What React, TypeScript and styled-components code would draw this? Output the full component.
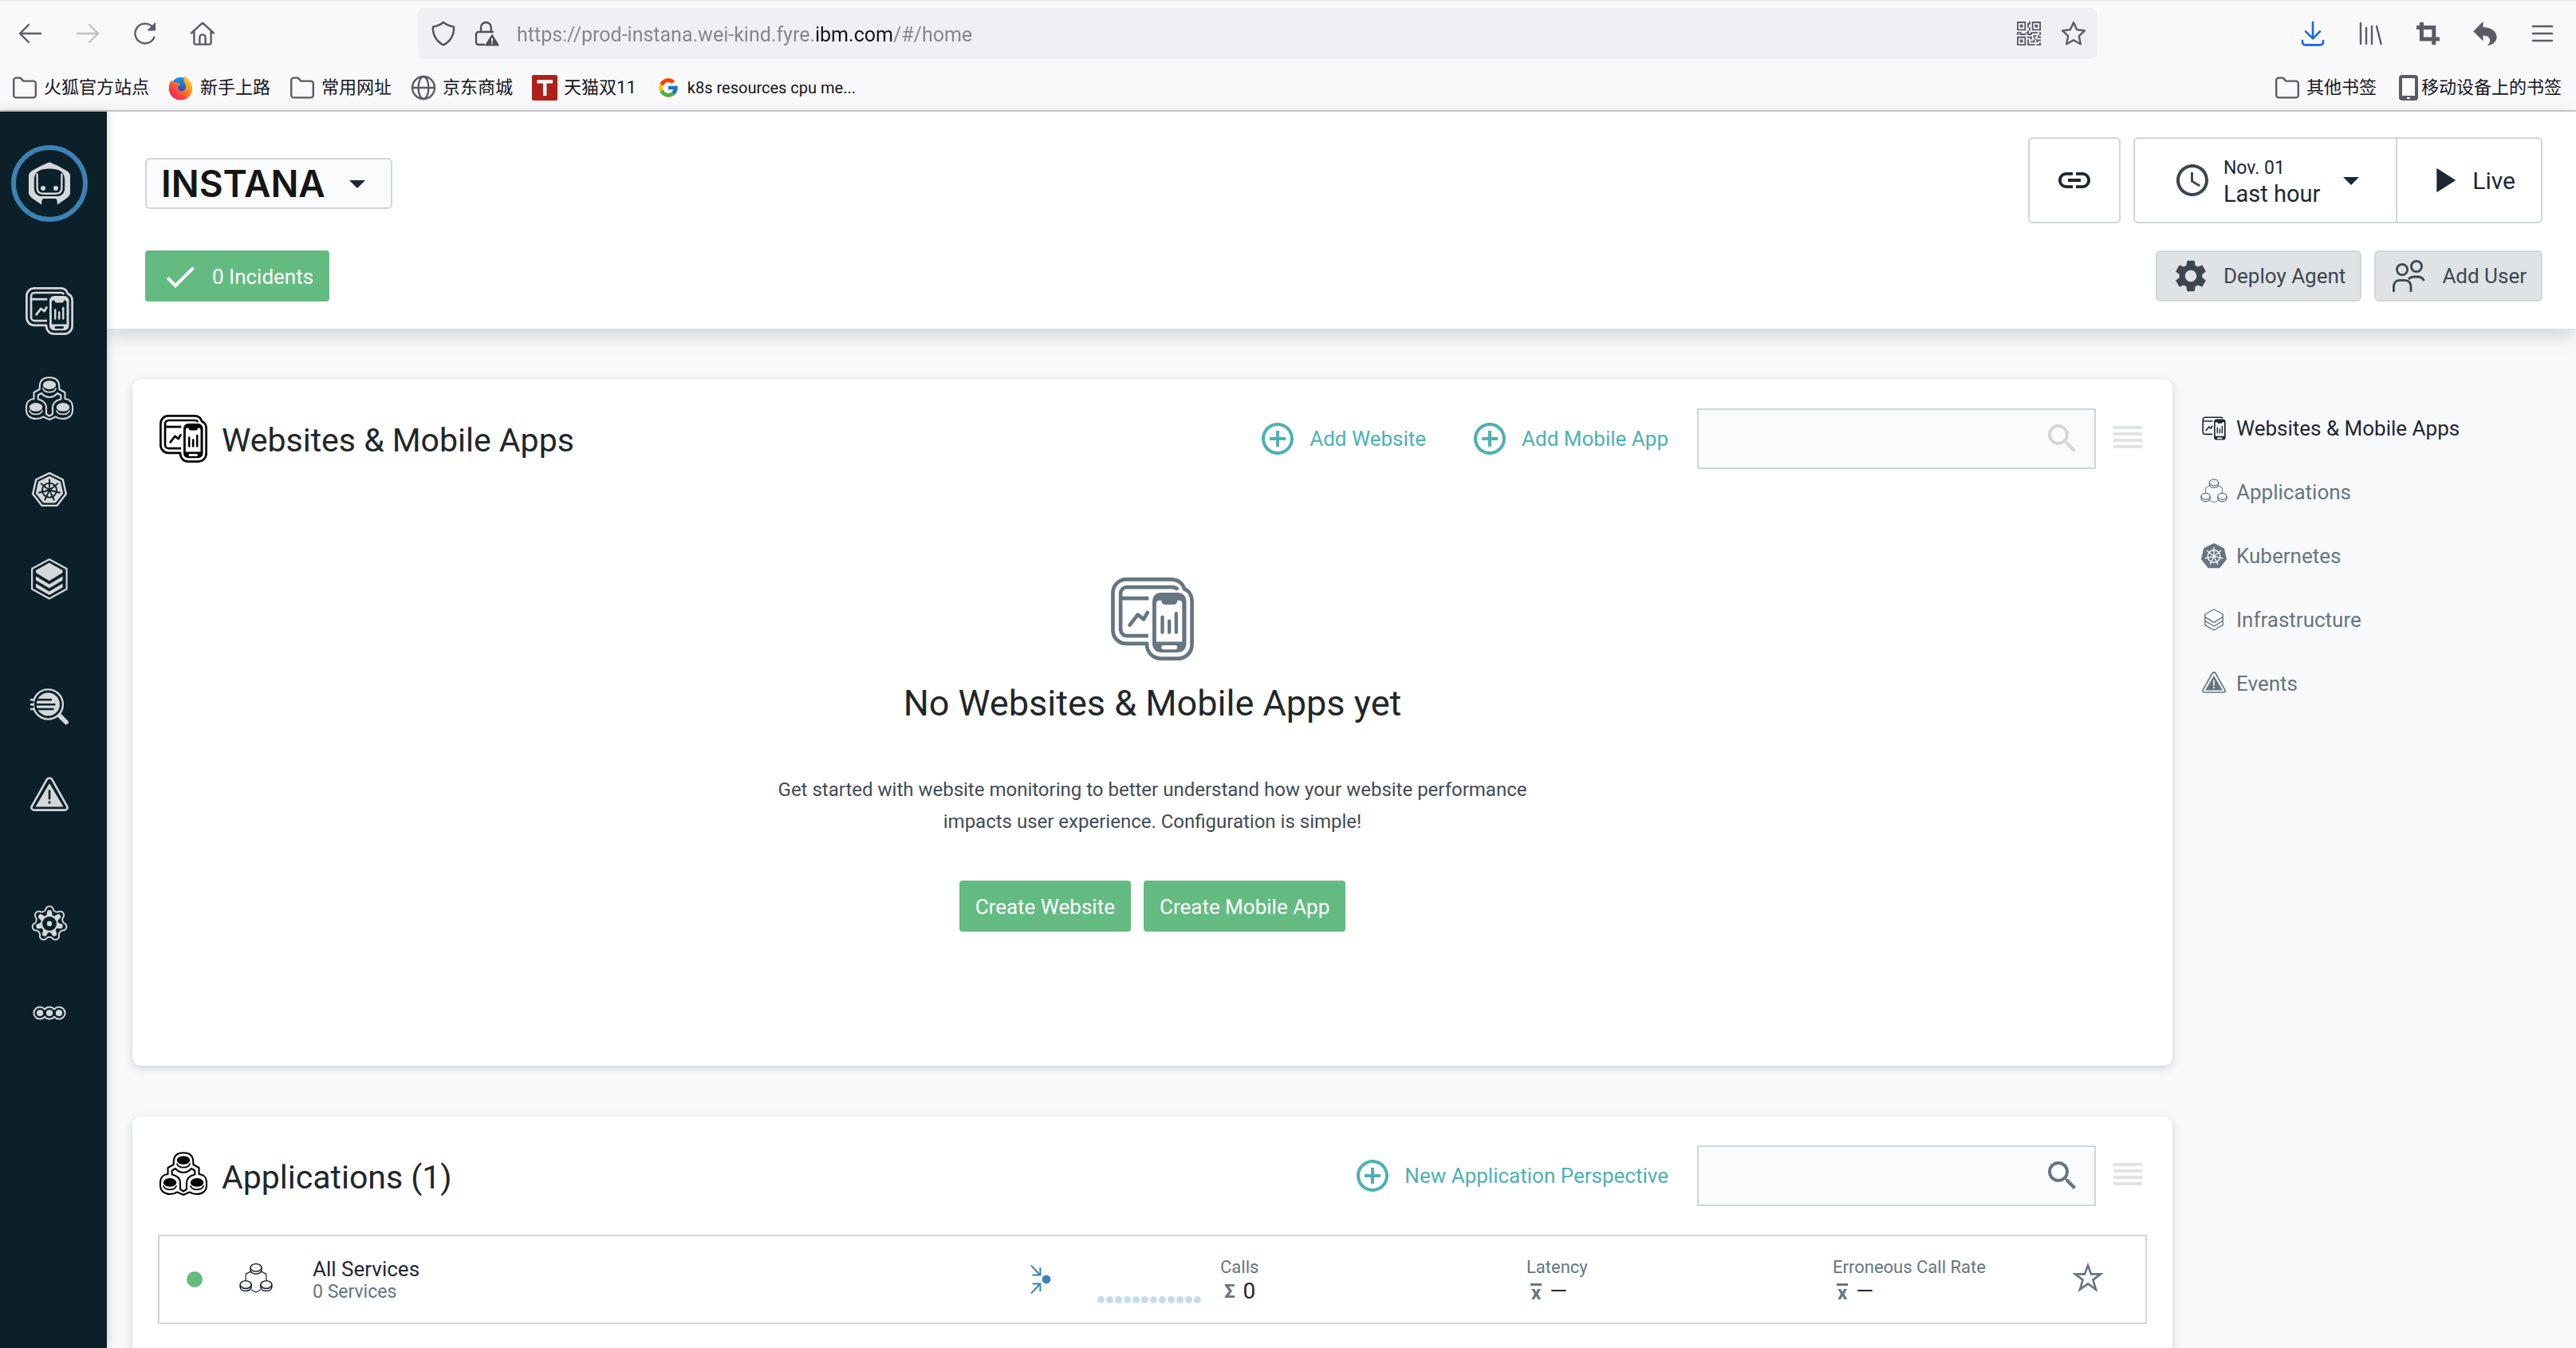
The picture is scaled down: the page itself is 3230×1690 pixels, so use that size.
import React from "react";
import styled, { createGlobalStyle } from "styled-components";
import { FcGoogle } from "react-icons/fc";
import { BsQrCode } from "react-icons/bs";
import {
  MdAccessTime,
  MdAddCircleOutline,
  MdArrowDropDown,
  MdCheck,
  MdLink,
  MdPlayArrow,
  MdSearch,
  MdSettings,
} from "react-icons/md";

const color = {
  ink: "#1d2733",
  title: "#212629",
  body: "#404b57",
  muted: "#667581",
  line: "#d1d5d8",
  field: "#fafbfd",
  page: "#f8f9fb",
  green: "#64bb82",
  teal: "#4db1b4",
  blue: "#3d82b4",
  nav: "#0c2029",
  navIcon: "#d4d8db",
  chrome: "#f9f9fb",
  chromeIcon: "#5b5b66",
};

const GlobalStyle = createGlobalStyle`
  *, *::before, *::after { box-sizing: border-box; }
  body { margin: 0; }
  body, button, input, select {
    font-family: Roboto, "Noto Sans CJK SC", sans-serif;
    font-size: 26px;
    color: ${color.ink};
  }
  button { background: none; border: 0; padding: 0; cursor: pointer; }
  a { color: inherit; text-decoration: none; }
  h1, h2, p, ul { margin: 0; padding: 0; font-weight: 400; }
  li { list-style: none; }
  svg { display: block; flex: none; }
`;

/* ---------- layout ---------- */

const Shell = styled.div`
  display: flex;
  flex-direction: column;
  height: 100vh;
  overflow: hidden;
  background: ${color.page};
`;

const Chrome = styled.header`
  flex: none;
  height: 140px;
  background: ${color.chrome};
  border-top: 2px solid #eeeef1;
  border-bottom: 2px solid #c9c9cd;
`;

const Toolbar = styled.div`
  display: flex;
  align-items: center;
  height: 80px;
  padding: 0 26px 0 22px;
  color: ${color.chromeIcon};
`;

const ToolGroup = styled.div<{ $gap: number }>`
  display: flex;
  align-items: center;
  gap: ${(p) => p.$gap}px;
`;

const ToolButton = styled.button<{ $tone?: string }>`
  display: grid;
  place-items: center;
  width: 32px;
  height: 40px;
  color: ${(p) => p.$tone ?? color.chromeIcon};
`;

const UrlBar = styled.div`
  flex: 1;
  display: flex;
  align-items: center;
  gap: 22px;
  height: 64px;
  margin: 0 254px;
  padding: 0 14px 0 16px;
  border-radius: 8px;
  background: #f0eff4;
  color: #4f4f58;
`;

const UrlInput = styled.input`
  flex: 1;
  min-width: 0;
  padding: 3px 0 0;
  border: 0;
  outline: 0;
  font-size: 25px;
  line-height: 40px;
  color: transparent;
  background: linear-gradient(90deg, #85858a 374px, #15141a 374px 472px, #85858a 472px);
  background-clip: text;
  -webkit-background-clip: text;
`;

const Bookmarks = styled.nav`
  display: flex;
  align-items: center;
  gap: 24px;
  height: 56px;
  padding: 0 18px 0 15px;
`;

const Bookmark = styled.a<{ $gap?: number }>`
  display: flex;
  align-items: center;
  gap: ${(p) => p.$gap ?? 8}px;
  font-size: 22px;
  line-height: 32px;
  color: #15141a;
  white-space: nowrap;
`;

const LatinLabel = styled.span`
  font-size: 20px;
`;

const IconSlot = styled.span`
  display: grid;
  place-items: center;
  width: 32px;
  height: 32px;
  color: ${color.chromeIcon};
`;

const Favicon = styled(IconSlot)`
  border-radius: 50%;
  background: #fff;
`;

const Spacer = styled.div`
  flex: 1;
`;

const Body = styled.div`
  flex: 1;
  display: flex;
  min-height: 0;
`;

const SideNav = styled.nav`
  flex: none;
  display: flex;
  flex-direction: column;
  gap: 48px;
  width: 134px;
  padding: 34px 10px 0 0;
  background: ${color.nav};
  color: ${color.navIcon};
  box-shadow: 0 0 12px rgba(0, 0, 0, 0.2);
  z-index: 2;
`;

const NavItem = styled.a`
  display: grid;
  place-items: center;
  height: 112px;
`;

const LogoRing = styled.span`
  display: grid;
  place-items: center;
  width: 96px;
  height: 96px;
  border: 6px solid ${color.blue};
  border-radius: 50%;
`;

const Main = styled.main`
  flex: 1;
  display: flex;
  flex-direction: column;
  min-width: 0;
`;

const PageHeader = styled.section`
  flex: none;
  display: flex;
  flex-direction: column;
  gap: 34px;
  padding: 32px 42px 34px 48px;
  background: #fff;
  box-shadow: 0 8px 24px rgba(0, 0, 0, 0.16);
  z-index: 1;
`;

const HeaderRow = styled.div<{ $gap: number }>`
  display: flex;
  align-items: center;
  gap: ${(p) => p.$gap}px;
`;

const Scroll = styled.div`
  flex: 1;
  display: flex;
  min-height: 0;
  overflow: hidden;
  padding: 64px 0 0 32px;
`;

const Cards = styled.div`
  flex: 1;
  display: flex;
  flex-direction: column;
  gap: 64px;
  min-width: 0;
`;

const Card = styled.section`
  flex: none;
  display: flex;
  flex-direction: column;
  gap: 36px;
  min-height: 860px;
  padding: 36px 32px;
  border-radius: 10px;
  background: #fff;
  box-shadow: 0 3px 12px rgba(0, 0, 0, 0.16);
`;

const CardHeader = styled.div`
  display: flex;
  align-items: center;
  height: 76px;
`;

const CardIcon = styled.span`
  display: grid;
  place-items: center;
  width: 64px;
  margin-right: 16px;
  color: #000;
`;

const CardTitle = styled.h2`
  flex: 1;
  padding-top: 4px;
  font-size: 41px;
  line-height: 52px;
  color: ${color.title};
`;

/* ---------- controls ---------- */

const TenantBox = styled.div`
  display: grid;
  align-items: center;
  width: 310px;
  margin-top: 8px;
`;

const TenantSelect = styled.select`
  grid-area: 1 / 1;
  appearance: none;
  width: 100%;
  height: 64px;
  padding: 0 0 0 18px;
  border: 2px solid ${color.line};
  border-radius: 6px;
  background: ${color.field};
  font-family: Inter, sans-serif;
  font-size: 46px;
  font-weight: 600;
  line-height: 56px;
  color: #151515;
`;

const TenantArrow = styled.span`
  grid-area: 1 / 1;
  justify-self: end;
  padding-right: 20px;
  pointer-events: none;
`;

const OutlineButton = styled.button<{ $padLeft: number; $padRight: number; $gap?: number }>`
  display: flex;
  align-items: center;
  gap: ${(p) => p.$gap ?? 0}px;
  height: 108px;
  padding: 0 ${(p) => p.$padRight}px 0 ${(p) => p.$padLeft}px;
  border: 2px solid ${color.line};
  border-radius: 6px;
  background: #fff;
  font-size: 30px;
`;

const TimeControls = styled.div`
  display: flex;
  margin-left: 16px;

  & > :first-child { border-radius: 6px 0 0 6px; border-right: 0; }
  & > :last-child { border-radius: 0 6px 6px 0; }
`;

const TimeText = styled.span`
  display: flex;
  flex-direction: column;
  padding-top: 4px;
  font-size: 29px;
  line-height: 34px;
  text-align: left;
  white-space: nowrap;
`;

const TimeDate = styled.span`
  font-size: 23px;
  line-height: 30px;
`;

const SolidButton = styled.button`
  display: flex;
  align-items: center;
  gap: 16px;
  height: 64px;
  padding: 2px 20px 0;
  border-radius: 4px;
  background: ${color.green};
  font-size: 26px;
  color: #fff;
  white-space: nowrap;
`;

const GreyButton = styled(SolidButton)`
  gap: 17px;
  padding: 0 18px;
  border: 2px solid ${color.line};
  border-radius: 6px;
  background: #dfe3e6;
  color: #3d464f;
`;

const LinkButton = styled.button`
  display: flex;
  align-items: center;
  gap: 16px;
  margin-right: 36px;
  padding-left: 20px;
  font-size: 26px;
  color: ${color.teal};
  white-space: nowrap;
`;

const SearchBox = styled.label<{ $tone: string }>`
  display: flex;
  align-items: center;
  width: 500px;
  height: 76px;
  padding: 0 16px;
  border: 2px solid ${color.line};
  background: ${color.field};
  color: ${(p) => p.$tone};
`;

const SearchInput = styled.input`
  flex: 1;
  min-width: 0;
  border: 0;
  outline: 0;
  background: transparent;
`;

const MenuButton = styled.button`
  display: flex;
  flex-direction: column;
  align-items: center;
  gap: 4px;
  width: 48px;
  margin-left: 16px;
  padding-bottom: 4px;
`;

const MenuBar = styled.span`
  width: 36px;
  height: 4px;
  background: #e0e3e6;
`;

/* ---------- empty state ---------- */

const Empty = styled.div`
  display: flex;
  flex-direction: column;
  align-items: center;
  padding-top: 100px;
  text-align: center;
  color: ${color.muted};
`;

const EmptyTitle = styled.h1`
  margin: 22px 0 56px;
  font-size: 45px;
  line-height: 64px;
  color: ${color.title};
`;

const EmptyText = styled.p`
  max-width: 960px;
  font-size: 24px;
  line-height: 40px;
  color: ${color.body};
`;

const ButtonRow = styled.div`
  display: flex;
  gap: 16px;
  margin-top: 54px;
`;

/* ---------- application row ---------- */

const AppRow = styled.li`
  display: flex;
  align-items: center;
  height: 112px;
  padding-left: 34px;
  border: 2px solid ${color.line};
`;

const Health = styled.span`
  width: 20px;
  height: 20px;
  margin-right: 46px;
  border-radius: 50%;
  background: ${color.green};
`;

const AppName = styled.a`
  flex: 1;
  display: flex;
  flex-direction: column;
  margin-left: 50px;
  padding-top: 2px;
  font-size: 26px;
  line-height: 30px;
`;

const Muted = styled.span`
  font-size: 23px;
  line-height: 28px;
  color: ${color.muted};
`;

const Spark = styled.span`
  display: flex;
  gap: 2px;
  align-self: flex-end;
  width: 154px;
  margin-left: 56px;
  padding-bottom: 24px;
`;

const SparkDot = styled.span`
  width: 9px;
  height: 9px;
  border-radius: 50%;
  background: #c6dcec;
`;

const Metric = styled.div<{ $width: number }>`
  flex: none;
  display: flex;
  flex-direction: column;
  width: ${(p) => p.$width}px;
`;

const MetricLabel = styled.span`
  font-size: 22px;
  line-height: 30px;
  color: ${color.muted};
`;

const MetricValue = styled.span`
  display: flex;
  align-items: center;
  gap: 10px;
  height: 30px;
  padding-left: 5px;
  font-size: 28px;
  line-height: 30px;
`;

const Sigma = styled.span`
  font-size: 24px;
  font-weight: 700;
  color: ${color.muted};
`;

const Mean = styled.span`
  padding: 0 1px;
  border-top: 3px solid ${color.muted};
  font-size: 24px;
  font-weight: 700;
  line-height: 18px;
  color: ${color.muted};
`;

const StarButton = styled.button`
  display: grid;
  place-items: center;
  width: 144px;
  height: 100%;
  padding-bottom: 4px;
  color: ${color.muted};
`;

/* ---------- section list ---------- */

const Sections = styled.nav`
  flex: none;
  display: flex;
  flex-direction: column;
  width: 506px;
  padding: 21px 0 0 35px;
`;

const SectionLink = styled.a<{ $active?: boolean }>`
  display: flex;
  align-items: center;
  gap: 11px;
  height: 80px;
  font-size: 26px;
  color: ${(p) => (p.$active ? color.ink : color.muted)};
`;

const SectionIcon = styled.span`
  display: grid;
  place-items: center;
  width: 34px;
`;

/* ---------- drawings ---------- */

const stroke = { fill: "none", stroke: "currentColor", strokeLinecap: "round", strokeLinejoin: "round" } as const;

const phone =
  "M36 11H48.5A6 6 0 0 1 54.5 17V48.2A6 6 0 0 1 48.5 54.2H36A6 6 0 0 1 30 48.2V17A6 6 0 0 1 36 11Z" +
  "M35 16.6A2.2 2.2 0 0 0 32.8 18.8V46.4H51.5V18.8A2.2 2.2 0 0 0 49.3 16.6H48C48 18.5 47 19.6 45.5 19.6H39C37.5 19.6 36.5 18.5 36.5 16.6Z" +
  "M38 49A1.5 1.5 0 0 0 38 52H46.5A1.5 1.5 0 0 0 46.5 49Z";

function WebsitesIcon({ size, outline = true }: { size: number; outline?: boolean }) {
  return (
    <svg width={size} height={size} viewBox={outline ? "0 0 60 60" : "5 5 50 50"} aria-hidden="true">
      <g {...stroke} strokeWidth="2.7">
        {outline && (
          <path d="M11 1.4H43.5C48.3 1.4 52 4 53 8.2C56.5 9.6 58.6 13 58.6 17V48.6a10 10 0 0 1-10 10H36a10 10 0 0 1-10-10V47.8H11A9.6 9.6 0 0 1 1.4 38.2V11A9.6 9.6 0 0 1 11 1.4Z" />
        )}
        <path strokeLinecap="butt" d="M48.4 8.8C47.4 7.6 46 7 44 7H11.5A4.5 4.5 0 0 0 7 11.5V37.7A4.5 4.5 0 0 0 11.5 42.2H27M7 15.1H27.3" />
        <path d="M13.6 34.4L19.4 26.9L23.7 30.2L26.4 25.4" />
        <path strokeWidth="2.5" d="M37.2 28.6V39.6M42.2 31.6V39.6M47.2 26V39.6" />
      </g>
      <path fill="currentColor" fillRule="evenodd" d={phone} />
    </svg>
  );
}

function AppsIcon({ size }: { size: number }) {
  const disc = (x: number, y: number) => (
    <g key={x}>
      <ellipse cx={x} cy={y} rx="8.2" ry="5.3" fill="currentColor" />
      <path {...stroke} strokeWidth="1.8" d={`M${x - 8} ${y + 4.6}C${x - 6} ${y + 10.4} ${x + 6} ${y + 10.4} ${x + 8} ${y + 4.6}`} />
    </g>
  );
  return (
    <svg width={size} height={size} viewBox="0 0 60 60" aria-hidden="true">
      <g {...stroke} strokeWidth="2.1">
        <path d="M17.7 13C17.7 5 22 1.2 30 1.2S42.3 5 42.3 13V16L49.5 20V28C55 28.5 59 32 59 38V42C59 49 54 53 47 53C43 53 40 52 38 50.5L30 54L22 50.5C20 52 17 53 13 53C6 53 1 49 1 42V38C1 32 5 28.5 10.5 28V20L17.7 16Z" />
        <path d="M15.7 28.5V23.5L20 21C23 24.5 26 26 30 26S37 24.5 40 21L44.3 23.5V28.5C38 30 34 33 34 39V47L30 49.6L26 47V39C26 33 22 30 15.7 28.5Z" />
      </g>
      {disc(30, 10.6)}
      {disc(13, 38.4)}
      {disc(47, 38.4)}
    </svg>
  );
}

function AppsLineIcon({ size }: { size: number }) {
  const can = (x: number, y: number) => (
    <g key={x}>
      <ellipse cx={x} cy={y} rx="5.8" ry="4" />
      <path d={`M${x - 5.8} ${y}V${y + 2.4}C${x - 5.8} ${y + 8} ${x + 5.8} ${y + 8} ${x + 5.8} ${y + 2.4}V${y}`} />
    </g>
  );
  return (
    <svg width={size} height={size} viewBox="0 0 35 35" aria-hidden="true">
      <g {...stroke} strokeWidth="1.3">
        {can(17.5, 5.2)}
        {can(6.8, 23)}
        {can(28.2, 23)}
        <path strokeWidth="1" d="M11.5 9.5L6.8 12V18.2M23.5 9.5L28.2 12V18.2M13 28.6L17.5 31L22 28.6" />
      </g>
    </svg>
  );
}

const polygon = (cx: number, cy: number, r: number) =>
  Array.from({ length: 7 }, (_, i) => {
    const a = (i * 2 * Math.PI) / 7 - Math.PI / 2;
    return `${(cx + r * Math.cos(a)).toFixed(2)},${(cy + r * Math.sin(a)).toFixed(2)}`;
  }).join(" ");

function KubeIcon({ size, outline, cut }: { size: number; outline?: boolean; cut: string }) {
  const r = outline ? 15.5 : 20;
  const wheel = outline ? 9 : 10.5;
  return (
    <svg width={size} height={size} viewBox="0 0 46 46" aria-hidden="true">
      {outline && <polygon {...stroke} strokeWidth="2.4" points={polygon(23, 23.6, 21.4)} />}
      <polygon points={polygon(23, 23.6, r)} fill="currentColor" stroke="currentColor" strokeWidth="4" strokeLinejoin="round" />
      <g fill="none" stroke={cut} strokeWidth="1.9">
        <circle cx="23" cy="23.6" r={wheel} />
        {Array.from({ length: 7 }, (_, i) => (
          <path key={i} transform={`rotate(${(i * 360) / 7} 23 23.6)`} d={`M23 20.6V${23.6 - wheel - 5}`} />
        ))}
      </g>
      <circle cx="23" cy="23.6" r="3" fill={cut} />
    </svg>
  );
}

function InfraIcon() {
  return (
    <svg width="46" height="52" viewBox="0 0 46 52" aria-hidden="true">
      <path {...stroke} strokeWidth="2.2" d="M22.8 1.3L44.6 13V38.5L22.8 50.5L1.1 38.5V13Z" />
      <path
        fill="currentColor"
        d="M22.8 5.6L39.5 15V18L22.8 28.3L6 18V15ZM6 22.6L22.8 32.4L39.5 22.6V27.6L22.8 37.6L6 27.6ZM6 31.6L22.8 41.4L39.5 31.6V36.4L22.8 46L6 36.4Z"
      />
    </svg>
  );
}

function InfraLineIcon() {
  return (
    <svg width="24" height="28" viewBox="0 0 24 28" aria-hidden="true">
      <path {...stroke} strokeWidth="1.4" d="M12 1L23.2 7V20.6L12 27L.8 20.6V7ZM.8 10.6L12 17.4L23.2 10.6M.8 15.4L12 22L23.2 15.4" />
    </svg>
  );
}

function AnalyzeIcon() {
  return (
    <svg width="48" height="46" viewBox="0 0 48 46" aria-hidden="true">
      <circle cx="22.3" cy="20" r="18.6" {...stroke} strokeWidth="2.4" />
      <circle cx="22.3" cy="20" r="14.6" fill="currentColor" />
      <path stroke={color.nav} strokeWidth="2.4" d="M8 14.2H27M7 20.2H31.5M8 26H29.5M1 17.2H4.4M1 23.2H4.4" />
      <path stroke="currentColor" strokeWidth="2.4" d="M0 14.2H4.6M0 20.2H3.6M0 26H4.6" />
      <path stroke="currentColor" strokeWidth="5.6" d="M35 32.5L40 37.5" />
      <path {...stroke} strokeWidth="5.6" d="M39 36.5L45 42.5" />
    </svg>
  );
}

function EventsIcon({ size, cut }: { size: number; cut: string }) {
  return (
    <svg width={size} height={size} viewBox="0 0 48 48" aria-hidden="true">
      <path {...stroke} strokeWidth="2.6" d="M20.8 3.2C22.2 .9 25.8 .9 27.2 3.2L46 36.6C47.4 39.2 46 41.6 43 41.6H5C2 41.6 .6 39.2 2 36.6Z" />
      <path fill="currentColor" d="M24 8L41.5 37.4H6.5Z" />
      <path stroke={cut} strokeWidth="2.6" d="M24 16.6V28.2M24 30.4V33.4" />
    </svg>
  );
}

const wave = (r: number, amp: number, sharp: number) =>
  "M" +
  Array.from({ length: 210 }, (_, i) => {
    const a = (i * 2 * Math.PI) / 210 - Math.PI / 2;
    const k = Math.tanh(sharp * Math.cos(7 * (a + Math.PI / 2))) / Math.tanh(sharp);
    const d = r + amp * k;
    return `${(23 + d * Math.cos(a)).toFixed(2)} ${(23 + d * Math.sin(a)).toFixed(2)}`;
  }).join("L") +
  "Z";

function SettingsIcon() {
  return (
    <svg width="46" height="46" viewBox="0 0 46 46" aria-hidden="true">
      <path {...stroke} strokeWidth="1.9" d={wave(19.3, 2.4, 1.4)} />
      <path fill="currentColor" d={wave(14, 3, 2)} />
      <circle cx="23" cy="23" r="9" fill={color.nav} />
      <circle cx="23" cy="23" r="3.2" fill="currentColor" />
    </svg>
  );
}

function MoreIcon() {
  return (
    <svg width="42" height="18" viewBox="0 0 42 18" aria-hidden="true">
      <path {...stroke} strokeWidth="2" d="M15 4.33A7.6 7.6 0 1 0 15 13.67A7.6 7.6 0 0 0 27 13.67A7.6 7.6 0 1 0 27 4.33A7.6 7.6 0 0 0 15 4.33Z" />
      {[9, 21, 33].map((x) => (
        <circle key={x} cx={x} cy="9" r="4.1" fill="currentColor" />
      ))}
    </svg>
  );
}

function RobotIcon() {
  return (
    <svg width="52" height="54" viewBox="0 0 52 53" aria-hidden="true">
      <path fill="currentColor" d="M26 0C28 0 46 9 49 11.5C51.5 13.5 52 15 52 18V38C52 41 50 43.5 47 45.4L36 53L35.4 47H16.6L16 53L5 45.4C2 43.5 0 41 0 38V18C0 15 .5 13.5 3 11.5C6 9 24 0 26 0Z" />
      <path fill={color.nav} d="M6.8 22C6.8 11 15 8 26 8S45.2 11 45.2 22V32C45.2 39 41 42.6 35 42.6H17C11 42.6 6.8 39 6.8 32ZM17.5 45.4H34.5V50H17.5Z" />
      <path {...stroke} strokeWidth="2.4" d="M10.6 15V32C10.6 37 13.5 39.2 18 39.2H34C38.5 39.2 41.4 37 41.4 32V15" />
      <circle cx="18" cy="32.4" r="3" fill="currentColor" />
      <circle cx="34" cy="32.4" r="3" fill="currentColor" />
    </svg>
  );
}

function FirefoxIcon() {
  return (
    <svg width="32" height="32" viewBox="0 0 32 32" aria-hidden="true">
      <defs>
        <linearGradient id="ff-body" x1="1" y1="0" x2="0.1" y2="1">
          <stop offset="0" stopColor="#fff14a" />
          <stop offset="0.35" stopColor="#ffa21f" />
          <stop offset="0.7" stopColor="#ff4438" />
          <stop offset="1" stopColor="#e5167a" />
        </linearGradient>
        <linearGradient id="ff-globe" x1="0" y1="0" x2="0" y2="1">
          <stop offset="0" stopColor="#1f9bf0" />
          <stop offset="1" stopColor="#283a9c" />
        </linearGradient>
      </defs>
      <circle cx="15.5" cy="14" r="11.2" fill="url(#ff-globe)" />
      <path fill="url(#ff-body)" d="M21.5 .5C23 4 27 6 29 10.5C33 20.5 26.5 31.5 16 31.5C7 31.5 .6 24.5 .8 16C.9 11.5 2.8 8 4.6 6C4.8 7.5 5.2 8.6 6 9.4C8 8.6 10.5 8.8 12 10L15.5 11.4C15 13 12.5 13.2 12 14.6C11.6 16.4 12.6 19.6 16.4 20C20 20.3 22.6 17.6 22 14C21.6 11 19.5 9.5 19.6 6.5C19.7 4 20.8 2.2 21.5 .5Z" />
    </svg>
  );
}

function ChromeIcon({ children, size = 32, weight = 2.4 }: { children: React.ReactNode; size?: number; weight?: number }) {
  return (
    <svg width={size} height={size} viewBox="0 0 32 32" {...stroke} strokeWidth={weight} aria-hidden="true">
      {children}
    </svg>
  );
}

const FolderIcon = () => (
  <ChromeIcon>
    <path d="M2.2 6.6A3 3 0 0 1 5.2 3.6H10.6L14.4 7.6H26.8A3 3 0 0 1 29.8 10.6V25.4A3 3 0 0 1 26.8 28.4H5.2A3 3 0 0 1 2.2 25.4Z" />
  </ChromeIcon>
);

const GlobeIcon = () => (
  <ChromeIcon>
    <circle cx="16" cy="16" r="14" />
    <ellipse cx="16" cy="16" rx="6.4" ry="14" />
    <path d="M2 16H30" />
  </ChromeIcon>
);

const PhoneIcon = () => (
  <ChromeIcon>
    <path fill="currentColor" stroke="none" fillRule="evenodd" d="M8 0H24A4 4 0 0 1 28 4V28A4 4 0 0 1 24 32H8A4 4 0 0 1 4 28V4A4 4 0 0 1 8 0ZM8 4V26H24V4ZM14 28V30H18V28Z" />
  </ChromeIcon>
);

const TmallIcon = () => (
  <ChromeIcon>
    <rect width="32" height="32" rx="2" fill="#ad2118" stroke="none" />
    <path stroke="#fff" strokeWidth="4.4" strokeLinecap="butt" d="M6.4 8.4H26M16.2 8.4V26" />
  </ChromeIcon>
);

const GatherIcon = () => (
  <svg width="28" height="36" viewBox="0 0 28 36" aria-hidden="true">
    <path fill="none" stroke={color.blue} strokeWidth="2" d="M1 .5L11.6 12M12.4 3V12.6H2.4M1 35.5L11.6 24M12.4 33V23.4H2.4" />
    <circle cx="20" cy="18" r="5.4" fill={color.blue} />
  </svg>
);

const UsersIcon = () => (
  <svg width="48" height="48" viewBox="-2 -4 48 48" {...stroke} strokeWidth="2.8" aria-hidden="true">
    <circle cx="13" cy="12" r="6.6" />
    <circle cx="31" cy="8" r="6.6" />
    <path strokeLinecap="butt" d="M2.4 40V34C2.4 28 6 25.4 10 25.4H16C20.6 25.4 24 28 24 34V40M21 24C23 21.6 25.6 21 28.6 21H32C36 21 39 22.6 40.4 26" />
  </svg>
);

const StarIcon = () => (
  <svg width="38" height="38" viewBox="0 0 38 38" aria-hidden="true">
    <path fill="none" stroke="currentColor" strokeWidth="2.6" d="M19 3.4L23 14.4H35L25.4 21.6L29 33.6L19 26.4L9 33.6L12.6 21.6L3 14.4H15Z" />
  </svg>
);

/* ---------- sections ---------- */

function BrowserChrome() {
  return (
    <Chrome>
      <Toolbar>
        <ToolGroup $gap={40}>
          <ToolButton aria-label="Back">
            <ChromeIcon><path d="M29 16H3M14 5L3 16L14 27" /></ChromeIcon>
          </ToolButton>
          <ToolButton aria-label="Forward" $tone="#bfbfc6">
            <ChromeIcon><path d="M3 16H29M18 5L29 16L18 27" /></ChromeIcon>
          </ToolButton>
          <ToolButton aria-label="Reload">
            <ChromeIcon>
              <path d="M27.4 20.6A12.4 12.4 0 1 1 24.6 7.2" />
              <path fill="currentColor" d="M28.6 3V12H19.6Z" strokeWidth="1" />
            </ChromeIcon>
          </ToolButton>
          <ToolButton aria-label="Home">
            <ChromeIcon><path d="M2 15.5L16 2.6L30 15.5M5.4 13V27.6A2 2 0 0 0 7.4 29.6H24.6A2 2 0 0 0 26.6 27.6V13M12.4 29V21A3.6 3.6 0 0 1 19.6 21V29" /></ChromeIcon>
          </ToolButton>
        </ToolGroup>
        <UrlBar>
          <ChromeIcon><path d="M16 1.8C20 5.4 24 6.6 29 7.6C29.8 17 25 26 16 30.4C7 26 2.2 17 3 7.6C8 6.6 12 5.4 16 1.8Z" /></ChromeIcon>
          <ChromeIcon>
            <path d="M9 13.6V8.4A6.4 6.4 0 0 1 21.8 8.4V13.6M13 30H6A3 3 0 0 1 3 27V17A3 3 0 0 1 6 14H24" />
            <path fill="currentColor" strokeWidth="1.6" d="M23 18L31 30.6H15Z" />
            <path stroke="#f0eff4" strokeWidth="2" d="M23 22.4V25.6M23 28.2V28.4" />
          </ChromeIcon>
          <UrlInput aria-label="Address" defaultValue="https://prod-instana.wei-kind.fyre.ibm.com/#/home" />
          <ToolGroup $gap={24}>
            <ToolButton aria-label="QR code"><BsQrCode size={30} /></ToolButton>
            <ToolButton aria-label="Bookmark page">
              <ChromeIcon><path d="M16 2.2L20.2 11.2L30 12.4L22.8 19.2L24.8 29.2L16 24.2L7.2 29.2L9.2 19.2L2 12.4L11.8 11.2Z" /></ChromeIcon>
            </ToolButton>
          </ToolGroup>
        </UrlBar>
        <ToolGroup $gap={40}>
          <ToolButton aria-label="Downloads" $tone="#1c66e0">
            <ChromeIcon weight={2.6}><path d="M16 2V22M7 13.4L16 22.4L25 13.4M3 25V27A3.4 3.4 0 0 0 6.4 30.4H25.6A3.4 3.4 0 0 0 29 27V25" /></ChromeIcon>
          </ToolButton>
          <ToolButton aria-label="Library">
            <ChromeIcon><path d="M4 3V29M11 9V29M18 7V29M24 7L29.6 29" /></ChromeIcon>
          </ToolButton>
          <ToolButton aria-label="Crop screenshot">
            <ChromeIcon weight={5}><path strokeLinecap="butt" strokeLinejoin="miter" d="M2 8.6H23.8V30M8.4 2V23H31" /></ChromeIcon>
          </ToolButton>
          <ToolButton aria-label="Undo">
            <ChromeIcon weight={1}>
              <path fill="currentColor" d="M13 2V8.6C24 8.6 31 14 30 22C29.4 26.4 25 30 19.6 30.6C24.6 27 24 18 13 18V24.6L2 13.4Z" />
            </ChromeIcon>
          </ToolButton>
          <ToolButton aria-label="Application menu">
            <ChromeIcon><path d="M4 7H28M4 16H28M4 25H28" /></ChromeIcon>
          </ToolButton>
        </ToolGroup>
      </Toolbar>
      <Bookmarks aria-label="Bookmarks">
        <Bookmark href="#"><IconSlot><FolderIcon /></IconSlot>火狐官方站点</Bookmark>
        <Bookmark href="#"><IconSlot><FirefoxIcon /></IconSlot>新手上路</Bookmark>
        <Bookmark href="#"><IconSlot><FolderIcon /></IconSlot>常用网址</Bookmark>
        <Bookmark href="#"><IconSlot><GlobeIcon /></IconSlot>京东商城</Bookmark>
        <Bookmark href="#"><IconSlot><TmallIcon /></IconSlot>天猫双11</Bookmark>
        <Bookmark href="#"><Favicon><FcGoogle size={28} /></Favicon><LatinLabel>k8s resources cpu me...</LatinLabel></Bookmark>
        <Spacer />
        <Bookmark href="#"><IconSlot><FolderIcon /></IconSlot>其他书签</Bookmark>
        <Bookmark href="#" $gap={0}><IconSlot><PhoneIcon /></IconSlot>移动设备上的书签</Bookmark>
      </Bookmarks>
    </Chrome>
  );
}

function Navigation() {
  return (
    <SideNav aria-label="Main">
      <NavItem href="#/home" aria-label="Home"><LogoRing><RobotIcon /></LogoRing></NavItem>
      <div>
        <NavItem href="#" aria-label="Websites & Mobile Apps"><WebsitesIcon size={60} /></NavItem>
        <NavItem href="#" aria-label="Applications"><AppsIcon size={60} /></NavItem>
        <NavItem href="#" aria-label="Kubernetes"><KubeIcon size={46} outline cut={color.nav} /></NavItem>
        <NavItem href="#" aria-label="Infrastructure"><InfraIcon /></NavItem>
      </div>
      <div>
        <NavItem href="#" aria-label="Analytics"><AnalyzeIcon /></NavItem>
        <NavItem href="#" aria-label="Events"><EventsIcon size={48} cut={color.nav} /></NavItem>
      </div>
      <div>
        <NavItem href="#" aria-label="Settings"><SettingsIcon /></NavItem>
        <NavItem href="#" aria-label="More"><MoreIcon /></NavItem>
      </div>
    </SideNav>
  );
}

function Header() {
  return (
    <PageHeader>
      <HeaderRow $gap={0}>
        <TenantBox>
          <TenantSelect aria-label="Tenant" defaultValue="INSTANA">
            <option>INSTANA</option>
          </TenantSelect>
          <TenantArrow><MdArrowDropDown size={48} /></TenantArrow>
        </TenantBox>
        <Spacer />
        <OutlineButton aria-label="Copy link" $padLeft={32} $padRight={32}><MdLink size={48} /></OutlineButton>
        <TimeControls>
          <OutlineButton $padLeft={48} $padRight={32} $gap={15}>
            <MdAccessTime size={48} color="#3d464f" />
            <TimeText>
              <TimeDate>Nov. 01</TimeDate>
              Last hour
            </TimeText>
            <MdArrowDropDown size={48} />
          </OutlineButton>
          <OutlineButton $padLeft={32} $padRight={32} $gap={10}>
            <MdPlayArrow size={52} />
            Live
          </OutlineButton>
        </TimeControls>
      </HeaderRow>
      <HeaderRow $gap={16}>
        <SolidButton><MdCheck size={48} />0 Incidents</SolidButton>
        <Spacer />
        <GreyButton><MdSettings size={48} />Deploy Agent</GreyButton>
        <GreyButton><UsersIcon />Add User</GreyButton>
      </HeaderRow>
    </PageHeader>
  );
}

function Search({ label, tone }: { label: string; tone: string }) {
  return (
    <>
      <SearchBox $tone={tone}>
        <SearchInput type="text" aria-label={label} />
        <MdSearch size={48} />
      </SearchBox>
      <MenuButton aria-label={`${label} options`}>
        <MenuBar /><MenuBar /><MenuBar /><MenuBar />
      </MenuButton>
    </>
  );
}

function WebsitesCard() {
  return (
    <Card>
      <CardHeader>
        <CardIcon><WebsitesIcon size={60} /></CardIcon>
        <CardTitle>Websites &amp; Mobile Apps</CardTitle>
        <LinkButton><MdAddCircleOutline size={48} />Add Website</LinkButton>
        <LinkButton><MdAddCircleOutline size={48} />Add Mobile App</LinkButton>
        <Search label="Search websites" tone="#d3d6d9" />
      </CardHeader>
      <Empty>
        <WebsitesIcon size={104} />
        <EmptyTitle>No Websites &amp; Mobile Apps yet</EmptyTitle>
        <EmptyText>
          Get started with website monitoring to better understand how your website performance impacts user
          experience. Configuration is simple!
        </EmptyText>
        <ButtonRow>
          <SolidButton>Create Website</SolidButton>
          <SolidButton>Create Mobile App</SolidButton>
        </ButtonRow>
      </Empty>
    </Card>
  );
}

function ApplicationsCard() {
  return (
    <Card>
      <CardHeader>
        <CardIcon><AppsIcon size={60} /></CardIcon>
        <CardTitle>Applications (1)</CardTitle>
        <LinkButton><MdAddCircleOutline size={48} />New Application Perspective</LinkButton>
        <Search label="Search applications" tone={color.muted} />
      </CardHeader>
      <ul>
        <AppRow>
          <Health />
          <AppsLineIcon size={42} />
          <AppName href="#">
            All Services
            <Muted>0 Services</Muted>
          </AppName>
          <GatherIcon />
          <Spark>
            {Array.from({ length: 12 }, (_, i) => (
              <SparkDot key={i} />
            ))}
          </Spark>
          <Metric $width={384}>
            <MetricLabel>Calls</MetricLabel>
            <MetricValue><Sigma>Σ</Sigma>0</MetricValue>
          </Metric>
          <Metric $width={384}>
            <MetricLabel>Latency</MetricLabel>
            <MetricValue><Mean>x</Mean>—</MetricValue>
          </Metric>
          <Metric $width={248}>
            <MetricLabel>Erroneous Call Rate</MetricLabel>
            <MetricValue><Mean>x</Mean>—</MetricValue>
          </Metric>
          <StarButton aria-label="Add to favourites"><StarIcon /></StarButton>
        </AppRow>
      </ul>
    </Card>
  );
}

export default function App() {
  return (
    <Shell>
      <GlobalStyle />
      <BrowserChrome />
      <Body>
        <Navigation />
        <Main>
          <Header />
          <Scroll>
            <Cards>
              <WebsitesCard />
              <ApplicationsCard />
            </Cards>
            <Sections aria-label="Sections">
              <SectionLink href="#" $active>
                <SectionIcon><WebsitesIcon size={30} outline={false} /></SectionIcon>Websites &amp; Mobile Apps
              </SectionLink>
              <SectionLink href="#"><SectionIcon><AppsLineIcon size={34} /></SectionIcon>Applications</SectionLink>
              <SectionLink href="#"><SectionIcon><KubeIcon size={34} cut={color.page} /></SectionIcon>Kubernetes</SectionLink>
              <SectionLink href="#"><SectionIcon><InfraLineIcon /></SectionIcon>Infrastructure</SectionLink>
              <SectionLink href="#"><SectionIcon><EventsIcon size={30} cut={color.page} /></SectionIcon>Events</SectionLink>
            </Sections>
          </Scroll>
        </Main>
      </Body>
    </Shell>
  );
}
